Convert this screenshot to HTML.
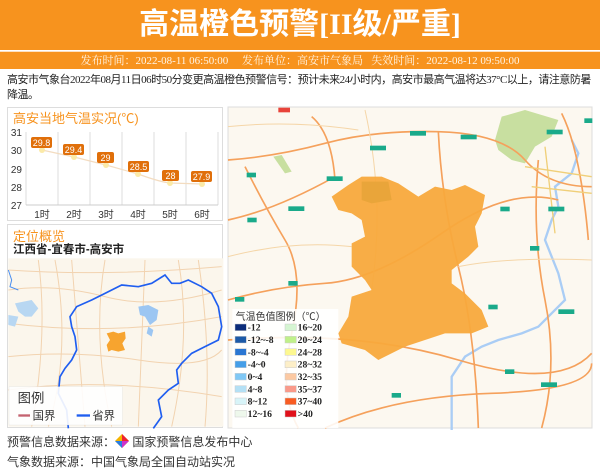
<!DOCTYPE html>
<html><head><meta charset="utf-8"><style>
*{margin:0;padding:0;box-sizing:border-box}
body{width:600px;height:471px;background:#fff;font-family:"Liberation Serif","Noto Serif CJK SC",serif;position:relative;overflow:hidden}
.hd{position:absolute;left:0;top:0;width:600px;height:50px;background:#f7931e;color:#fff;text-align:center;font-size:30px;font-weight:bold;line-height:50px;font-family:"Liberation Serif","Noto Sans CJK SC",sans-serif}
.sub{position:absolute;left:0;top:51px;width:600px;height:18px;background:#f7931e;color:#fff4e4;text-align:center;font-size:11px;line-height:18px;border-top:1px solid #fde0c0}
.txt{position:absolute;left:7px;top:73px;width:593px;font-size:11px;line-height:15px;color:#222;font-family:"Liberation Serif","Noto Sans CJK SC",sans-serif;letter-spacing:-0.5px}
.box{position:absolute;border:1px solid #ddd;background:#fff}
.ft{position:absolute;left:7px;font-size:12px;color:#333;font-family:"Liberation Sans","Noto Sans CJK SC",sans-serif}
</style></head><body>
<div class="hd">高温橙色预警[II级/严重]</div>
<div class="sub">发布时间：2022-08-11 06:50:00 &nbsp;&nbsp;&nbsp; 发布单位：高安市气象局 &nbsp; 失效时间：2022-08-12 09:50:00</div>
<div class="txt">高安市气象台2022年08月11日06时50分变更高温橙色预警信号：预计未来24小时内，高安市最高气温将达37°C以上，请注意防暑降温。</div>

<div class="box" style="left:7px;top:107px;width:216px;height:114px"></div>
<svg style="position:absolute;left:0;top:105px" width="230" height="120">
<text x="13" y="18" font-size="13" fill="#f7931e" font-family="Liberation Sans,Noto Sans CJK SC,sans-serif">高安当地气温实况(℃)</text>
<g font-size="10" fill="#333" font-family="Liberation Sans,sans-serif" text-anchor="end">
<text x="22" y="31">31</text><text x="22" y="49">30</text><text x="22" y="68">29</text><text x="22" y="86">28</text><text x="22" y="104">27</text></g>
<g stroke="#ddd" stroke-width="1">
<line x1="26" y1="27" x2="26" y2="100"/><line x1="58" y1="27" x2="58" y2="100"/><line x1="90" y1="27" x2="90" y2="100"/><line x1="122" y1="27" x2="122" y2="100"/><line x1="154" y1="27" x2="154" y2="100"/><line x1="186" y1="27" x2="186" y2="100"/><line x1="218" y1="27" x2="218" y2="100"/>
<line x1="26" y1="100" x2="218" y2="100" stroke="#ccc"/></g>
<path d="M42,45 L74,52 L106,60 L138,69 Q160,77 170,78 L202,79" fill="none" stroke="#f3dcc0" stroke-width="1.2"/>
<g fill="#fbeaa8"><circle cx="42" cy="45" r="3"/><circle cx="74" cy="52" r="3"/><circle cx="106" cy="60" r="3"/><circle cx="138" cy="69" r="3"/><circle cx="170" cy="78" r="3"/><circle cx="202" cy="79" r="3"/></g>
<g fill="#e06f0a"><rect x="31" y="32" width="21" height="11" rx="2"/><rect x="63" y="39" width="21" height="11" rx="2"/><rect x="97" y="47" width="17" height="11" rx="2"/><rect x="128" y="56" width="21" height="11" rx="2"/><rect x="162" y="65" width="17" height="11" rx="2"/><rect x="191" y="66" width="21" height="11" rx="2"/></g>
<g fill="#fff" font-size="9" text-anchor="middle" font-family="Liberation Sans,sans-serif"><text x="41.5" y="41">29.8</text><text x="73.5" y="48">29.4</text><text x="105.5" y="56">29</text><text x="138.5" y="65">28.5</text><text x="170.5" y="74">28</text><text x="201.5" y="75">27.9</text></g>
<g font-size="10" fill="#333" text-anchor="middle" font-family="Liberation Sans,Noto Sans CJK SC,sans-serif"><text x="42" y="113">1时</text><text x="74" y="113">2时</text><text x="106" y="113">3时</text><text x="138" y="113">4时</text><text x="170" y="113">5时</text><text x="202" y="113">6时</text></g>
</svg>

<div class="box" style="left:7px;top:224px;width:216px;height:204px"></div>
<div style="position:absolute;left:13px;top:226px;font-size:13px;color:#f7931e;font-family:'Liberation Sans','Noto Sans CJK SC',sans-serif">定位概览</div>
<div style="position:absolute;left:13px;top:241px;font-size:11.5px;color:#222;font-weight:bold;font-family:'Liberation Sans','Noto Sans CJK SC',sans-serif">江西省-宜春市-高安市</div>
<svg style="position:absolute;left:5px;top:250px" width="220" height="180" viewBox="0 0 660 540">
<rect x="10" y="25" width="645" height="505" fill="#fbf6ec"/>
<g fill="none" stroke="#f2d3b0" stroke-width="3">
<path d="M10,120 Q150,100 300,140 T650,120"/><path d="M10,320 Q200,300 400,330 T650,300"/><path d="M100,30 Q130,250 80,530"/><path d="M300,30 Q260,260 320,530"/><path d="M520,30 Q560,260 500,530"/><path d="M10,420 Q300,380 650,440"/><path d="M10,220 Q330,260 650,200"/><path d="M200,30 L240,530"/><path d="M420,30 L400,530"/><path d="M10,60 Q300,80 650,50"/><path d="M150,30 Q200,300 130,530"/><path d="M580,30 Q620,300 600,530"/></g>
<path d="M400,170 L430,165 460,180 455,210 435,225 420,200 405,195Z M430,230 L445,240 440,260 425,250Z" fill="#9cc6f2"/>
<path d="M30,160 L80,150 100,175 80,200 60,200 40,185Z M10,195 L40,200 30,230 10,225Z" fill="#b8d7f2"/>
<path d="M190,535 L185,480 160,430 165,380 180,355 200,330 215,300 210,260 200,230 195,200 215,170 260,150 300,130 350,105 400,110 440,100 480,75 500,100 525,100 550,90 590,110 620,130 640,170 650,230 640,270 600,290 560,310 530,340 515,360 520,400 490,420 460,450 470,500 445,535" fill="none" stroke="#1f5ef0" stroke-width="5"/>
<path d="M10,60 L20,90 15,110 40,120" fill="none" stroke="#4a8ef0" stroke-width="3"/>
<path d="M305,250 L325,245 340,250 360,245 362,265 352,280 360,300 340,305 320,300 310,305 305,285 315,270Z" fill="#f7a42f"/>
<rect x="12" y="410" width="340" height="115" fill="#fff" opacity=".9" stroke="#ddd"/>
<text x="38" y="458" font-size="40" fill="#333" font-family="Noto Sans CJK SC,sans-serif">图例</text>
<rect x="40" y="493" width="35" height="7" fill="#c4626f"/>
<text x="83" y="508" font-size="34" fill="#333" font-family="Noto Sans CJK SC,sans-serif">国界</text>
<rect x="215" y="493" width="40" height="7" fill="#1f5ef0"/>
<text x="262" y="508" font-size="34" fill="#333" font-family="Noto Sans CJK SC,sans-serif">省界</text>
</svg>

<svg style="position:absolute;left:225px;top:100px" width="375" height="330" viewBox="0 0 1125 990">
<rect x="9" y="21" width="1092" height="963" fill="#fcf8f0" stroke="#ddd" stroke-width="3"/>
<path d="M830,50 L900,30 1000,60 980,110 930,140 900,190 860,180 820,150 810,120Z" fill="#c8dfa0"/>
<path d="M145,170 L170,165 200,215 180,220Z" fill="#c8dfa0"/>
<path d="M1040,120 L1060,160 1040,220 990,260 1000,320 980,360 960,420 1000,520 1020,600 980,640 940,680 890,700 820,720 770,740 720,770 680,830 680,990" fill="none" stroke="#aacdf5" stroke-width="7"/>
<g fill="none" stroke="#f5a15c" stroke-width="5">
<path d="M9,180 Q150,170 300,130 T640,95 T900,180 T1100,260"/>
<path d="M60,200 Q120,320 180,420 T200,700 T220,984"/>
<path d="M9,360 Q150,330 330,230"/>
<path d="M9,600 Q150,560 300,550 T650,400 T1000,300"/>
<path d="M9,720 Q400,690 700,780 T1100,760"/>
<path d="M300,984 Q500,890 800,880 T1100,790"/>
<path d="M940,180 Q920,400 960,600 T950,984"/>
<path d="M1010,40 Q1040,100 1060,200 T1090,420"/>
<path d="M260,50 Q320,100 330,240"/>
<path d="M640,95 Q650,300 700,500 T760,984"/>
</g>
<g fill="none" stroke="#f5d6a8" stroke-width="3"><path d="M9,470 Q200,420 380,440"/><path d="M9,80 Q200,60 400,90"/><path d="M700,500 Q850,470 1100,480"/><path d="M420,30 Q480,300 440,570"/></g>
<g fill="none" stroke="#f0cf78" stroke-width="4"><path d="M900,200 L1100,230"/><path d="M920,260 L1100,280"/><path d="M960,140 L990,400"/></g>
<path d="M320,290 L370,255 410,230 470,230 520,250 580,290 630,260 680,270 720,255 780,285 770,340 750,380 760,440 730,470 680,510 680,550 720,580 770,630 790,680 740,700 660,700 600,720 540,740 460,780 420,750 350,730 340,700 370,650 380,590 440,570 420,540 380,500 380,430 420,410 410,360 380,340 340,330Z" fill="#f8a93c" opacity=".95"/>
<path d="M410,245 L490,245 500,300 440,310 410,300Z" fill="#e9a53a"/>
<g fill="#1aaa8a"><rect x="435" y="137" width="48" height="14"/><rect x="555" y="93" width="48" height="14"/><rect x="707" y="104" width="48" height="14"/><rect x="305" y="229" width="48" height="14"/><rect x="190" y="319" width="48" height="14"/><rect x="65" y="218" width="28" height="14"/><rect x="67" y="353" width="28" height="14"/><rect x="190" y="543" width="28" height="14"/><rect x="30" y="591" width="28" height="14"/><rect x="826" y="320" width="28" height="14"/><rect x="970" y="320" width="48" height="14"/><rect x="965" y="89" width="48" height="14"/><rect x="915" y="438" width="28" height="14"/><rect x="790" y="614" width="28" height="14"/><rect x="1000" y="628" width="48" height="14"/><rect x="840" y="808" width="28" height="14"/><rect x="948" y="847" width="48" height="14"/><rect x="500" y="879" width="28" height="14"/><rect x="1078" y="55" width="24" height="14"/></g>
<rect x="160" y="23" width="35" height="14" fill="#e8433a"/>
<rect x="22" y="627" width="318" height="357" fill="#fff" opacity=".88"/>
<text x="32" y="660" font-size="30" fill="#333" font-family="Noto Sans CJK SC,sans-serif">气温色值图例（℃）</text>
<g stroke="#ccc" stroke-width="1.5">
<rect x="30" y="672" width="34" height="20" fill="#0b2c7a"/><rect x="30" y="709" width="34" height="20" fill="#1d5aa8"/><rect x="30" y="746" width="34" height="20" fill="#2a76d2"/><rect x="30" y="783" width="34" height="20" fill="#459ee8"/><rect x="30" y="820" width="34" height="20" fill="#80c8f5"/><rect x="30" y="857" width="34" height="20" fill="#b4e0f5"/><rect x="30" y="894" width="34" height="20" fill="#d8f4f8"/><rect x="30" y="931" width="34" height="20" fill="#eef8ec"/>
<rect x="180" y="672" width="34" height="20" fill="#d5f5d2"/><rect x="180" y="709" width="34" height="20" fill="#c0f08a"/><rect x="180" y="746" width="34" height="20" fill="#fdf890"/><rect x="180" y="783" width="34" height="20" fill="#fdefc8"/><rect x="180" y="820" width="34" height="20" fill="#fcc9a2"/><rect x="180" y="857" width="34" height="20" fill="#f99a8a"/><rect x="180" y="894" width="34" height="20" fill="#f85c22"/><rect x="180" y="931" width="34" height="20" fill="#e0101a"/></g>
<g font-size="29" font-weight="bold" fill="#222" font-family="Liberation Serif,serif">
<text x="68" y="692">-12</text><text x="68" y="729">-12~-8</text><text x="68" y="766">-8~-4</text><text x="68" y="803">-4~0</text><text x="68" y="840">0~4</text><text x="68" y="877">4~8</text><text x="68" y="914">8~12</text><text x="68" y="951">12~16</text>
<text x="218" y="692">16~20</text><text x="218" y="729">20~24</text><text x="218" y="766">24~28</text><text x="218" y="803">28~32</text><text x="218" y="840">32~35</text><text x="218" y="877">35~37</text><text x="218" y="914">37~40</text><text x="218" y="951">&gt;40</text></g>
</svg>

<div class="ft" style="top:433px">预警信息数据来源：<svg width="14" height="14" viewBox="0 0 14 14" style="vertical-align:-2px"><path d="M7,0 L14,7 7,14 0,7Z" fill="#f5b400"/><path d="M7,0 L14,7 7,7Z" fill="#e23"/><path d="M0,7 L7,7 7,14Z" fill="#2a7de1"/><path d="M7,7 L14,7 7,14Z" fill="#c3c"/></svg> 国家预警信息发布中心</div>
<div class="ft" style="top:453px">气象数据来源：中国气象局全国自动站实况</div>
</body></html>
